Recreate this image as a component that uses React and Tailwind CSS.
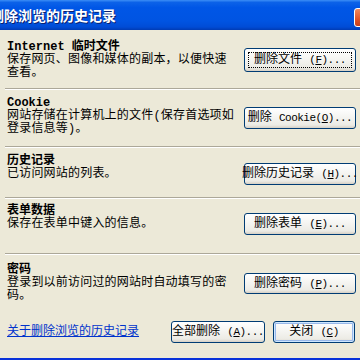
import React from 'react';

// Latin runs are narrowed to match the half-width look of the original UI font
const L = ({ children, u }) => (
  <span className={`text-[11px] tracking-[-0.5px] ${u ? 'underline' : ''}`}>{children}</span>
);

// mnemonic like (F) with only the letter underlined
const Key = ({ k }) => (
  <>
    <L>(</L>
    <L u>{k}</L>
    <L>)</L>
  </>
);

const XpButton = ({ children, w, h = 22, mt = 0, focused = false, isDefault = false }) => (
  <div
    className={`relative shrink-0 flex items-center justify-center rounded-[3px] border border-[#003c74] bg-[linear-gradient(to_bottom,#ffffff_0%,#f6f6f3_40%,#ecebe5_85%,#d6d0c5_100%)] text-[12px] text-black ${
      isDefault ? 'shadow-[inset_0_0_0_1px_#cee7ff,inset_0_0_0_2px_#98b8ea]' : ''
    }`}
    style={{ width: w, height: h, marginTop: mt }}
  >
    {focused && <span className="absolute inset-[3px] border border-dotted border-black" />}
    <span className="relative whitespace-nowrap leading-none">{children}</span>
  </div>
);

const Section = ({ h, t, b, bh, title, lines, button, focused }) => (
  <div className="flex pl-[7px] pr-[4px]" style={{ height: h }}>
    <div className="flex-1" style={{ paddingTop: t }}>
      <div className="text-[12px] leading-[12px] font-bold text-black">{title}</div>
      <div className="text-[12px] leading-[12.5px] tracking-[0.2px] text-black mt-[1px]">
        {lines.map((ln, i) => (
          <div key={i}>{ln}</div>
        ))}
      </div>
    </div>
    <XpButton w={112} h={bh} mt={b} focused={focused}>
      {button}
    </XpButton>
  </div>
);

const Sep = () => <div className="ml-[5px] border-t border-[#aca899] border-b border-b-white" />;

export default function App() {
  return (
    <div className="w-[360px] h-[360px] overflow-hidden bg-[#ece9d8] flex flex-col font-['Liberation_Mono','Noto_Sans_CJK_SC',monospace]">
      {/* title bar */}
      <div className="h-[30px] shrink-0 flex items-center overflow-hidden bg-[linear-gradient(to_bottom,#3c8ef6_0%,#0c62e8_8%,#0056e6_25%,#0054e2_70%,#004cd6_90%,#003bb4_100%)]">
        <span className="ml-[-10px] text-[14px] font-bold text-white font-['Noto_Sans_CJK_SC',sans-serif] [text-shadow:1px_1px_0_#0a1f6e] whitespace-nowrap">
          删除浏览的历史记录
        </span>
        <div className="ml-auto mr-[-18px] w-[24px] h-[19px] mt-[4px] rounded-[3px] border border-white bg-[linear-gradient(to_bottom,#f08a5e,#e0542a_60%,#c9401b)]" />
      </div>

      <Section
        h={58}
        t={11}
        b={18}
        bh={24}
        focused
        title={<><span>Internet</span> 临时文件</>}
        lines={['保存网页、图像和媒体的副本，以便快速', '查看。']}
        button={<>删除文件 <Key k="F" /><L>...</L></>}
      />
      <Sep />
      <Section
        h={56}
        t={7}
        b={17}
        bh={22}
        title="Cookie"
        lines={['网站存储在计算机上的文件(保存首选项如', '登录信息等)。']}
        button={<>删除 <L>Cookie</L><Key k="O" /><L>...</L></>}
      />
      <Sep />
      <Section
        h={49}
        t={7}
        b={15}
        bh={22}
        title="历史记录"
        lines={['已访问网站的列表。']}
        button={<>删除历史记录 <Key k="H" /><L>...</L></>}
      />
      <Sep />
      <Section
        h={54}
        t={6}
        b={14}
        bh={22}
        title="表单数据"
        lines={['保存在表单中键入的信息。']}
        button={<>删除表单 <Key k="E" /><L>...</L></>}
      />
      <Sep />
      <Section
        h={55}
        t={9}
        b={18}
        bh={21}
        title="密码"
        lines={['登录到以前访问过的网站时自动填写的密', '码。']}
        button={<>删除密码 <Key k="P" /><L>...</L></>}
      />

      {/* bottom row */}
      <div className="flex-1 flex items-start pl-[7px] pr-[5px]">
        <span className="mt-[16px] text-[12px] leading-[12px] text-[#0033cc] underline flex-1">
          关于删除浏览的历史记录
        </span>
        <div className="flex gap-[8px] mt-[11px]">
          <XpButton w={94} h={22}>
            全部删除 <Key k="A" /><L>...</L>
          </XpButton>
          <XpButton w={82} h={22} isDefault>
            关闭 <Key k="C" />
          </XpButton>
        </div>
      </div>
      <div className="h-[2px] shrink-0 bg-[#0831d9]" />
    </div>
  );
}
